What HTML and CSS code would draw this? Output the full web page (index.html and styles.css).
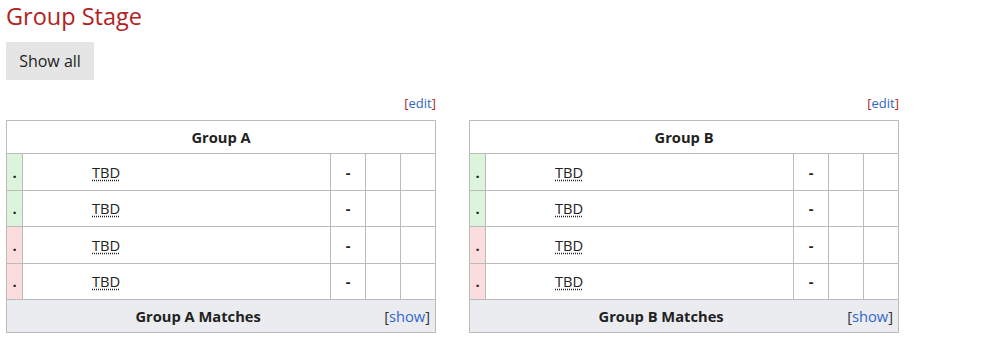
FILE: index.html
```html
<!DOCTYPE html>
<html>
<head>
<meta charset="utf-8">
<link rel="stylesheet" href="styles.css">
</head>
<body>
<h2 class="title">Group Stage</h2>
<button class="show-all">Show all</button>
<div class="groups">
  <div class="group">
    <div class="edit"><span class="br">[</span><a href="#">edit</a><span class="br">]</span></div>
    <table class="gt">
      <colgroup><col class="c-pos"><col class="c-team"><col class="c-n"><col class="c-n"><col class="c-n"></colgroup>
      <tr class="hdr"><th colspan="5">Group A</th></tr>
      <tr class="row"><td class="pos up">.</td><td class="team"><abbr>TBD</abbr></td><td class="dash">-</td><td></td><td></td></tr>
      <tr class="row"><td class="pos up">.</td><td class="team"><abbr>TBD</abbr></td><td class="dash">-</td><td></td><td></td></tr>
      <tr class="row"><td class="pos down">.</td><td class="team"><abbr>TBD</abbr></td><td class="dash">-</td><td></td><td></td></tr>
      <tr class="row"><td class="pos down">.</td><td class="team"><abbr>TBD</abbr></td><td class="dash">-</td><td></td><td></td></tr>
      <tr class="ftr"><td colspan="5"><span class="toggle">[<a href="#">show</a>]</span><b>Group A Matches</b></td></tr>
    </table>
  </div>
  <div class="group">
    <div class="edit"><span class="br">[</span><a href="#">edit</a><span class="br">]</span></div>
    <table class="gt">
      <colgroup><col class="c-pos"><col class="c-team"><col class="c-n"><col class="c-n"><col class="c-n"></colgroup>
      <tr class="hdr"><th colspan="5">Group B</th></tr>
      <tr class="row"><td class="pos up">.</td><td class="team"><abbr>TBD</abbr></td><td class="dash">-</td><td></td><td></td></tr>
      <tr class="row"><td class="pos up">.</td><td class="team"><abbr>TBD</abbr></td><td class="dash">-</td><td></td><td></td></tr>
      <tr class="row"><td class="pos down">.</td><td class="team"><abbr>TBD</abbr></td><td class="dash">-</td><td></td><td></td></tr>
      <tr class="row"><td class="pos down">.</td><td class="team"><abbr>TBD</abbr></td><td class="dash">-</td><td></td><td></td></tr>
      <tr class="ftr"><td colspan="5"><span class="toggle">[<a href="#">show</a>]</span><b>Group B Matches</b></td></tr>
    </table>
  </div>
</div>
</body>
</html>
```
FILE: styles.css
```css
body {
  margin: 0;
  padding: 0 6px;
  font-family: "Open Sans", "DejaVu Sans", sans-serif;
  color: #222;
  background: #fff;
}
.title {
  margin: 0;
  font-size: 23.5px;
  font-weight: 400;
  line-height: 33px;
  color: #b22222;
}
.show-all {
  display: block;
  margin-top: 9px;
  width: 88px;
  height: 38px;
  padding: 0;
  border: none;
  background: #e5e5e5;
  font-family: "Open Sans", "DejaVu Sans", sans-serif;
  font-size: 16px;
  color: #222;
}
.groups {
  display: flex;
  gap: 33px;
}
.group {
  width: 430px;
}
.edit {
  margin-top: 15px;
  margin-bottom: 8px;
  text-align: right;
  font-size: 13px;
  line-height: 17px;
}
.edit .br {
  color: #b22222;
}
a {
  color: #3366cc;
  text-decoration: none;
}
.gt {
  width: 430px;
  table-layout: fixed;
  border-collapse: collapse;
  font-size: 14.7px;
  line-height: 20px;
}
.c-pos { width: 16px; }
.c-team { width: 308px; }
.c-n { width: 35px; }
.gt th, .gt td {
  border: 1px solid #bbb;
  padding: 0;
}
.hdr th {
  height: 32px;
  font-weight: 700;
  text-align: center;
}
.row td {
  height: 35.5px;
}
.gt .pos {
  text-align: center;
  font-weight: 700;
  vertical-align: middle;
  line-height: 26px;
}
.pos.up { background: #dcf4dc; }
.pos.down { background: #fbdddd; }
.gt .team {
  padding-left: 69px;
}
.team abbr {
  text-decoration: underline dotted;
  text-underline-offset: 2px;
}
.dash {
  text-align: center;
  font-weight: 700;
}
.gt .ftr td {
  height: 32px;
  background: #eaecf0;
  text-align: center;
  padding: 0 5px;
}
.toggle {
  float: right;
  font-weight: 400;
  color: #333;
}
```
